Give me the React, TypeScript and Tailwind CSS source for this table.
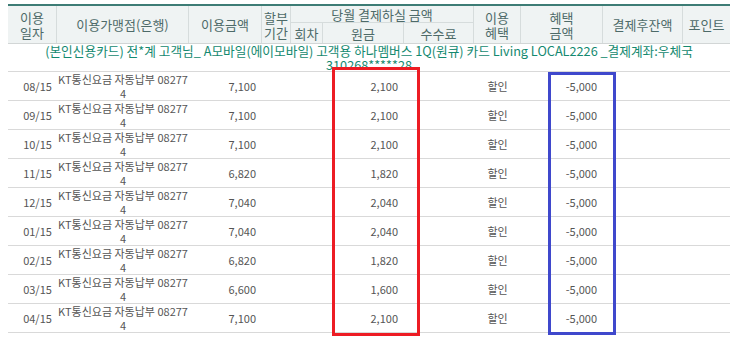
import React from 'react';

const rows = [
    { date: '08/15', amount: '7,100', principal: '2,100' },
    { date: '09/15', amount: '7,100', principal: '2,100' },
    { date: '10/15', amount: '7,100', principal: '2,100' },
    { date: '11/15', amount: '6,820', principal: '1,820' },
    { date: '12/15', amount: '7,040', principal: '2,040' },
    { date: '01/15', amount: '7,040', principal: '2,040' },
    { date: '02/15', amount: '6,820', principal: '1,820' },
    { date: '03/15', amount: '6,600', principal: '1,600' },
    { date: '04/15', amount: '7,100', principal: '2,100' },
];

const cols = 'grid grid-cols-[49px_132px_73px_29px_32px_81px_70px_47px_82px_80px_47px]';
const th = 'flex flex-col items-center justify-center text-center border-[#d6dcdc]';

export default function App() {
    return (
        <div
            className="relative w-[746px] h-[358px] bg-white overflow-hidden pt-[4px] pl-[8px]"
            style={{ fontFamily: '"Noto Sans CJK KR", "Liberation Sans", sans-serif' }}
        >
            <div className="w-[722px]">
                {/* header */}
                <div className={`${cols} grid-rows-[17px_20px] border-t-2 border-b border-t-[#3d7c75] border-b-[#d2d6d6] bg-[#eff3f3] text-[13px] leading-[15px] text-[#4d6a68]`}>
                    <div className={`${th} row-span-2 border-r`}><span className="block">이용</span><span className="block">일자</span></div>
                    <div className={`${th} row-span-2 border-r`}>이용가맹점(은행)</div>
                    <div className={`${th} row-span-2 border-r`}>이용금액</div>
                    <div className={`${th} row-span-2 border-r`}><span className="block">할부</span><span className="block">기간</span></div>
                    <div className={`${th} col-span-3 border-r border-b`}>당월 결제하실 금액</div>
                    <div className={`${th} row-span-2 border-r`}><span className="block">이용</span><span className="block">혜택</span></div>
                    <div className={`${th} row-span-2 border-r`}><span className="block">혜택</span><span className="block">금액</span></div>
                    <div className={`${th} row-span-2 border-r`}>결제후잔액</div>
                    <div className={`${th} row-span-2`}>포인트</div>
                    <div className={`${th} col-start-5 row-start-2 border-r`}>회차</div>
                    <div className={`${th} col-start-6 row-start-2 border-r`}>원금</div>
                    <div className={`${th} col-start-7 row-start-2 border-r`}>수수료</div>
                </div>

                {/* card info */}
                <div className="flex h-[28px] flex-col items-center justify-center border-b border-[#d9d9d9] text-[12.7px] leading-[14px] text-[#14896f]">
                    <span className="block whitespace-nowrap">
                        (본인신용카드) 전*계 고객님_ A모바일(에이모바일) 고객용 하나멤버스 1Q(원큐) 카드 Living LOCAL2226 _결제계좌:우체국
                    </span>
                    <span className="block">310268*****28</span>
                </div>

                {/* rows */}
                {rows.map((r) => (
                    <div
                        key={r.date}
                        className={`${cols} h-[29px] items-center border-b border-[#d9d9d9] text-[11px] leading-[14px] text-[#555]`}
                    >
                        <div className="pl-[10px] text-center">{r.date}</div>
                        <div className="flex flex-col items-center">
                            <span className="block whitespace-nowrap">KT통신요금 자동납부 08277</span>
                            <span className="block">4</span>
                        </div>
                        <div className="pr-[6px] text-right">{r.amount}</div>
                        <div />
                        <div />
                        <div className="pr-[6px] text-right">{r.principal}</div>
                        <div />
                        <div className="text-center">할인</div>
                        <div className="pr-[6px] text-right">-5,000</div>
                        <div />
                        <div />
                    </div>
                ))}
            </div>

            {/* highlight boxes */}
            <div className="absolute left-[332px] top-[67px] h-[269px] w-[88px] border-[3px] border-[#ed1c24]" />
            <div className="absolute left-[548px] top-[72px] h-[263px] w-[68px] border-[3px] border-[#3f48cc]" />
        </div>
    );
}
